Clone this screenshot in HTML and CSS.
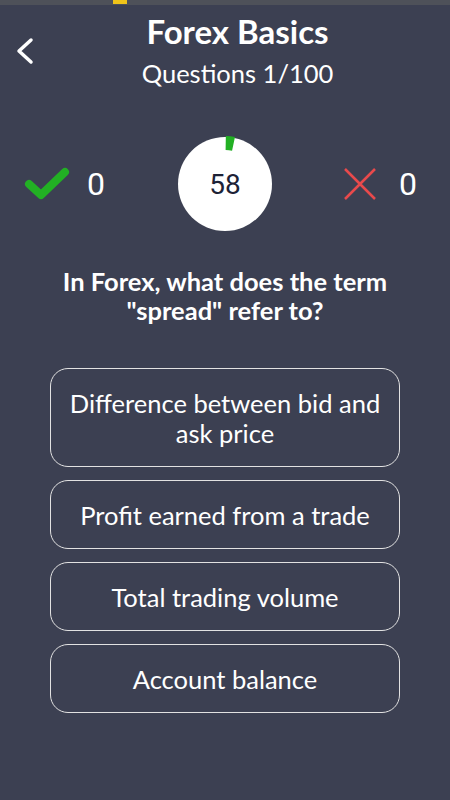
FILE: index.html
```html
<html>
    <head>
        <meta charset="UTF-8">
        <title>Forex Basics</title>
        <link rel="stylesheet" href="styles.css">
    </head>
    <body>
        <div class="statusbar"><span class="notify"></span></div>
        <div class="header">
            <div class="back">
                <svg width="20" height="30" viewBox="0 0 20 30"><path d="M16 4 L4 15 L16 26" fill="none" stroke="#fff" stroke-width="3.5" stroke-linecap="round" stroke-linejoin="round"/></svg>
            </div>
            <div class="titles">
                <div class="title">Forex Basics</div>
                <div class="subtitle">Questions 1/100</div>
            </div>
        </div>
        <div class="stats">
            <div class="score score-good">
                <svg width="46" height="34" viewBox="0 0 46 34"><path d="M5 17 L17 28 L41 5" fill="none" stroke="#22b024" stroke-width="8" stroke-linecap="round" stroke-linejoin="round"/></svg>
                <span class="count">0</span>
            </div>
            <div class="timer">
                <svg class="ring" width="94" height="94" viewBox="0 0 94 94"><path d="M47.72 6.01 A41 41 0 0 1 55.52 6.89" fill="none" stroke="#22b024" stroke-width="14"/></svg>
                <span class="seconds">58</span>
            </div>
            <div class="score score-bad">
                <svg width="32" height="32" viewBox="0 0 32 32"><path d="M1 1 L31 31 M31 1 L1 31" fill="none" stroke="#e84a4c" stroke-width="2.5"/></svg>
                <span class="count">0</span>
            </div>
        </div>
        <div class="question">In Forex, what does the term<br/>"spread" refer to?</div>
        <div class="answers">
            <div class="answer">Difference between bid and ask price</div>
            <div class="answer">Profit earned from a trade</div>
            <div class="answer">Total trading volume</div>
            <div class="answer">Account balance</div>
        </div>
    </body>
</html>
```

FILE: styles.css
```css
* {
    box-sizing:border-box;
}
body {
    margin:0;
    background:#3c4052;
    color:#fff;
    font-family: Lato, "Open Sans", sans-serif;
    height:800px;
}
.statusbar {
    height:5px;
    background:#4e5159;
    padding-left:113px;
}
.notify {
    display:block;
    width:14px;
    height:4px;
    background:#f0c419;
}
.header {
    display:grid;
    grid-template-columns:50px 1fr 25px;
    align-items:center;
    padding-top:8px;
}
.back {
    padding-left:15px;
    display:flex;
}
.titles {
    text-align:center;
}
.title {
    font-size:33px;
    font-weight:bold;
    line-height:36px;
}
.subtitle {
    font-size:25.5px;
    line-height:30px;
    margin-top:9px;
}
.stats {
    display:grid;
    grid-template-columns:1fr 94px 1fr;
    align-items:center;
    margin-top:49px;
}
.score {
    display:flex;
    align-items:center;
    font-family: Roboto, sans-serif;
}
.score-good {
    padding-left:24px;
    gap:17px;
}
.score-bad {
    padding-left:72px;
    gap:23px;
}
.count {
    font-size:32px;
    line-height:34px;
}
.timer {
    width:94px;
    height:94px;
    border-radius:50%;
    background:#fff;
    position:relative;
    display:flex;
    align-items:center;
    justify-content:center;
}
.ring {
    position:absolute;
    top:0;
    left:0;
    overflow:visible;
}
.seconds {
    font-family: Roboto, sans-serif;
    font-size:28px;
    color:#1d2236;
}
.question {
    margin-top:36px;
    text-align:center;
    font-size:25.5px;
    font-weight:bold;
    line-height:29px;
}
.answers {
    display:flex;
    flex-direction:column;
    gap:13px;
    padding:0 50px;
    margin-top:43px;
}
.answer {
    border:1.5px solid #e2e2e2;
    border-radius:18px;
    padding:18.5px 16px;
    text-align:center;
    font-size:25.5px;
    line-height:30px;
}
```
